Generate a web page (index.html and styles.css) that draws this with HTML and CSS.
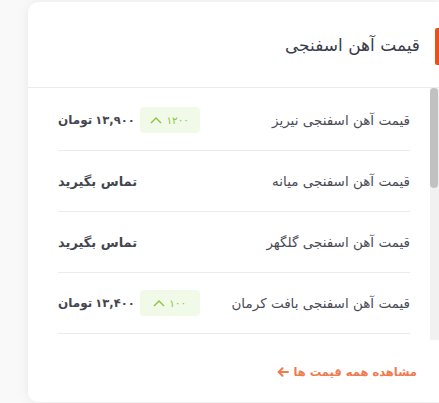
FILE: index.html
```html
<!DOCTYPE html>
<html lang="fa" dir="rtl">
<head>
<meta charset="utf-8">
<link rel="stylesheet" href="styles.css">
</head>
<body>
<div class="card">
  <div class="card-header">
    <span class="accent"></span>
    <h2 class="card-title">قیمت آهن اسفنجی</h2>
  </div>
  <div class="list-wrap">
    <div class="scrollbar"><div class="thumb"></div></div>
    <div class="price-list">
      <div class="row">
        <span class="name">قیمت آهن اسفنجی نیریز</span>
        <div class="value">
          <span class="badge"><span class="num">۱۲۰۰</span> <svg width="12" height="8" viewBox="0 0 12 8"><path d="M1 7 L6 2 L11 7" fill="none" stroke="#8cc63f" stroke-width="1.4"/></svg></span>
          <span class="price"><span class="num">۱۳,۹۰۰</span> تومان</span>
        </div>
      </div>
      <div class="row">
        <span class="name">قیمت آهن اسفنجی میانه</span>
        <div class="value"><span class="price call">تماس بگیرید</span></div>
      </div>
      <div class="row">
        <span class="name">قیمت آهن اسفنجی گلگهر</span>
        <div class="value"><span class="price call">تماس بگیرید</span></div>
      </div>
      <div class="row">
        <span class="name">قیمت آهن اسفنجی بافت کرمان</span>
        <div class="value">
          <span class="badge"><span class="num">۱۰۰</span> <svg width="12" height="8" viewBox="0 0 12 8"><path d="M1 7 L6 2 L11 7" fill="none" stroke="#8cc63f" stroke-width="1.4"/></svg></span>
          <span class="price"><span class="num">۱۳,۴۰۰</span> تومان</span>
        </div>
      </div>
    </div>
  </div>
  <div class="card-footer">
    <a class="more-link" href="#">مشاهده همه قیمت ها <svg width="12" height="10" viewBox="0 0 12 10"><path d="M11 5 H2 M5.5 1.2 L1.6 5 L5.5 8.8" fill="none" stroke="#f07b4f" stroke-width="2" stroke-linecap="round" stroke-linejoin="round"/></svg></a>
  </div>
</div>
</body>
</html>
```
FILE: styles.css
```css
html, body {
  margin: 0;
  padding: 0;
}
body {
  background: #f9f9f9;
  font-family: "DejaVu Sans", "Noto Sans", sans-serif;
  overflow: hidden;
  height: 403px;
}
.card {
  margin: 2px 0 0 28px;
  width: 411px;
  height: 400px;
  background: #fff;
  border-radius: 10px 0 0 10px;
  box-shadow: 0 0 14px rgba(0, 0, 0, 0.07);
  display: flex;
  flex-direction: column;
}
.card-header {
  height: 85px;
  border-bottom: 1px solid #ececec;
  display: flex;
  align-items: center;
  gap: 15px;
}
.accent {
  width: 4px;
  height: 37px;
  background: #e8501c;
  border-radius: 2px 0 0 2px;
  margin-top: 3px;
}
.card-title {
  margin: 0;
  font-size: 17px;
  font-weight: normal;
  color: #3a3d4a;
}
.list-wrap {
  height: 252px;
  display: flex;
}
.scrollbar {
  width: 9px;
  background: #f1f1f1;
  display: flex;
  flex-direction: column;
}
.thumb {
  height: 100px;
  background: #c1c1c1;
  border-radius: 4px;
  margin: 0 1px 0 0;
}
.price-list {
  flex: 1;
  padding-top: 2px;
}
.row {
  height: 60px;
  margin: 0 20px 0 30px;
  border-bottom: 1px solid #ebebeb;
  display: flex;
  align-items: center;
  justify-content: space-between;
}
.name {
  font-size: 13.5px;
  color: #4a4c57;
}
.value {
  display: flex;
  align-items: center;
  gap: 5px;
}
.price {
  font-size: 12px;
  font-weight: bold;
  color: #44464f;
  display: flex;
  align-items: baseline;
  gap: 3px;
}
.price.call {
  font-size: 13px;
}
.price .num {
  font-size: 11.5px;
  letter-spacing: -1.8px;
}
.badge {
  width: 60px;
  height: 26px;
  background: #f1f9e8;
  border-radius: 4px;
  display: flex;
  align-items: center;
  justify-content: center;
  gap: 4px;
  font-size: 10.5px;
  color: #8cc63f;
}
.badge .num {
  letter-spacing: -0.5px;
}
.card-footer {
  flex: 1;
  display: flex;
  align-items: center;
  padding: 0 22px 0 0;
}
.more-link {
  color: #f07b4f;
  font-size: 11.5px;
  font-weight: bold;
  text-decoration: none;
  display: flex;
  align-items: center;
  gap: 4px;
  margin-top: 2px;
}
```
